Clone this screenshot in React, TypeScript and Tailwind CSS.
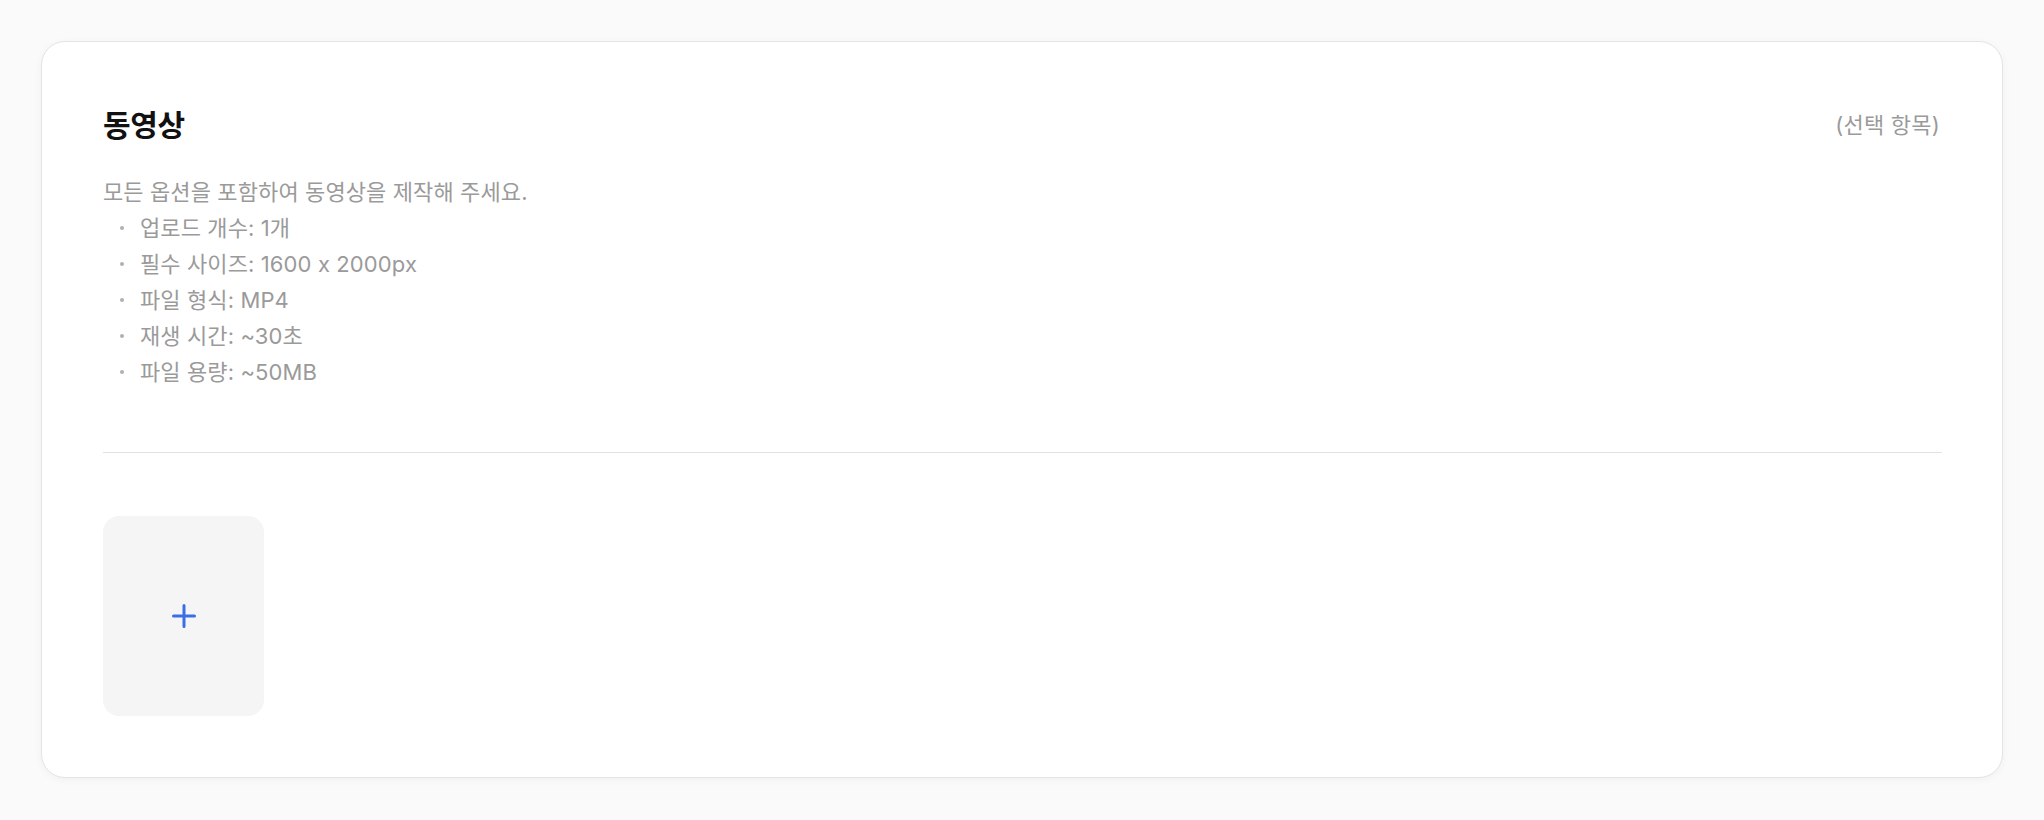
const specs = [
  '업로드 개수: 1개',
  '필수 사이즈: 1600 x 2000px',
  '파일 형식: MP4',
  '재생 시간: ~30초',
  '파일 용량: ~50MB',
];

export default function App() {
  return (
    <div
      className="min-h-screen bg-[#fafafa] p-[41px]"
      style={{ fontFamily: 'Inter, "Noto Sans CJK KR", sans-serif' }}
    >
      <section className="rounded-[24px] border border-[#e4e4e4] bg-white pl-[61px] pr-[60px] pt-[60px] pb-[61px] shadow-[0_2px_8px_rgba(0,0,0,0.04)]">
        {/* Header */}
        <div className="flex h-[46px] items-center justify-between">
          <h2 className="text-[30px] font-bold tracking-[-0.01em] text-[#111111]">동영상</h2>
          <span className="mr-[2px] text-[22px] tracking-[0.01em] text-[#9a9a9a]">(선택 항목)</span>
        </div>

        {/* Guide */}
        <div className="mt-[26px] text-[22px] leading-[36px] tracking-[0.005em] text-[#9a9a9a]">
          <p>모든 옵션을 포함하여 동영상을 제작해 주세요.</p>
          <ul>
            {specs.map((s) => (
              <li key={s} className="flex items-center">
                <span className="ml-[17px] mr-[16px] h-[4px] w-[4px] rounded-full bg-[#b0b0b0]" />
                <span>{s}</span>
              </li>
            ))}
          </ul>
        </div>

        <div className="mt-[62px] h-px bg-[#e2e2e2]" />

        {/* Upload slot */}
        <button className="mt-[63px] flex h-[200px] w-[161px] items-center justify-center rounded-[16px] bg-[#f5f5f5]">
          <svg width="24" height="24" viewBox="0 0 24 24" fill="none" stroke="#3b6fe3" strokeWidth="3" strokeLinecap="round">
            <path d="M12 1.5v21M1.5 12h21" />
          </svg>
        </button>
      </section>
    </div>
  );
}
